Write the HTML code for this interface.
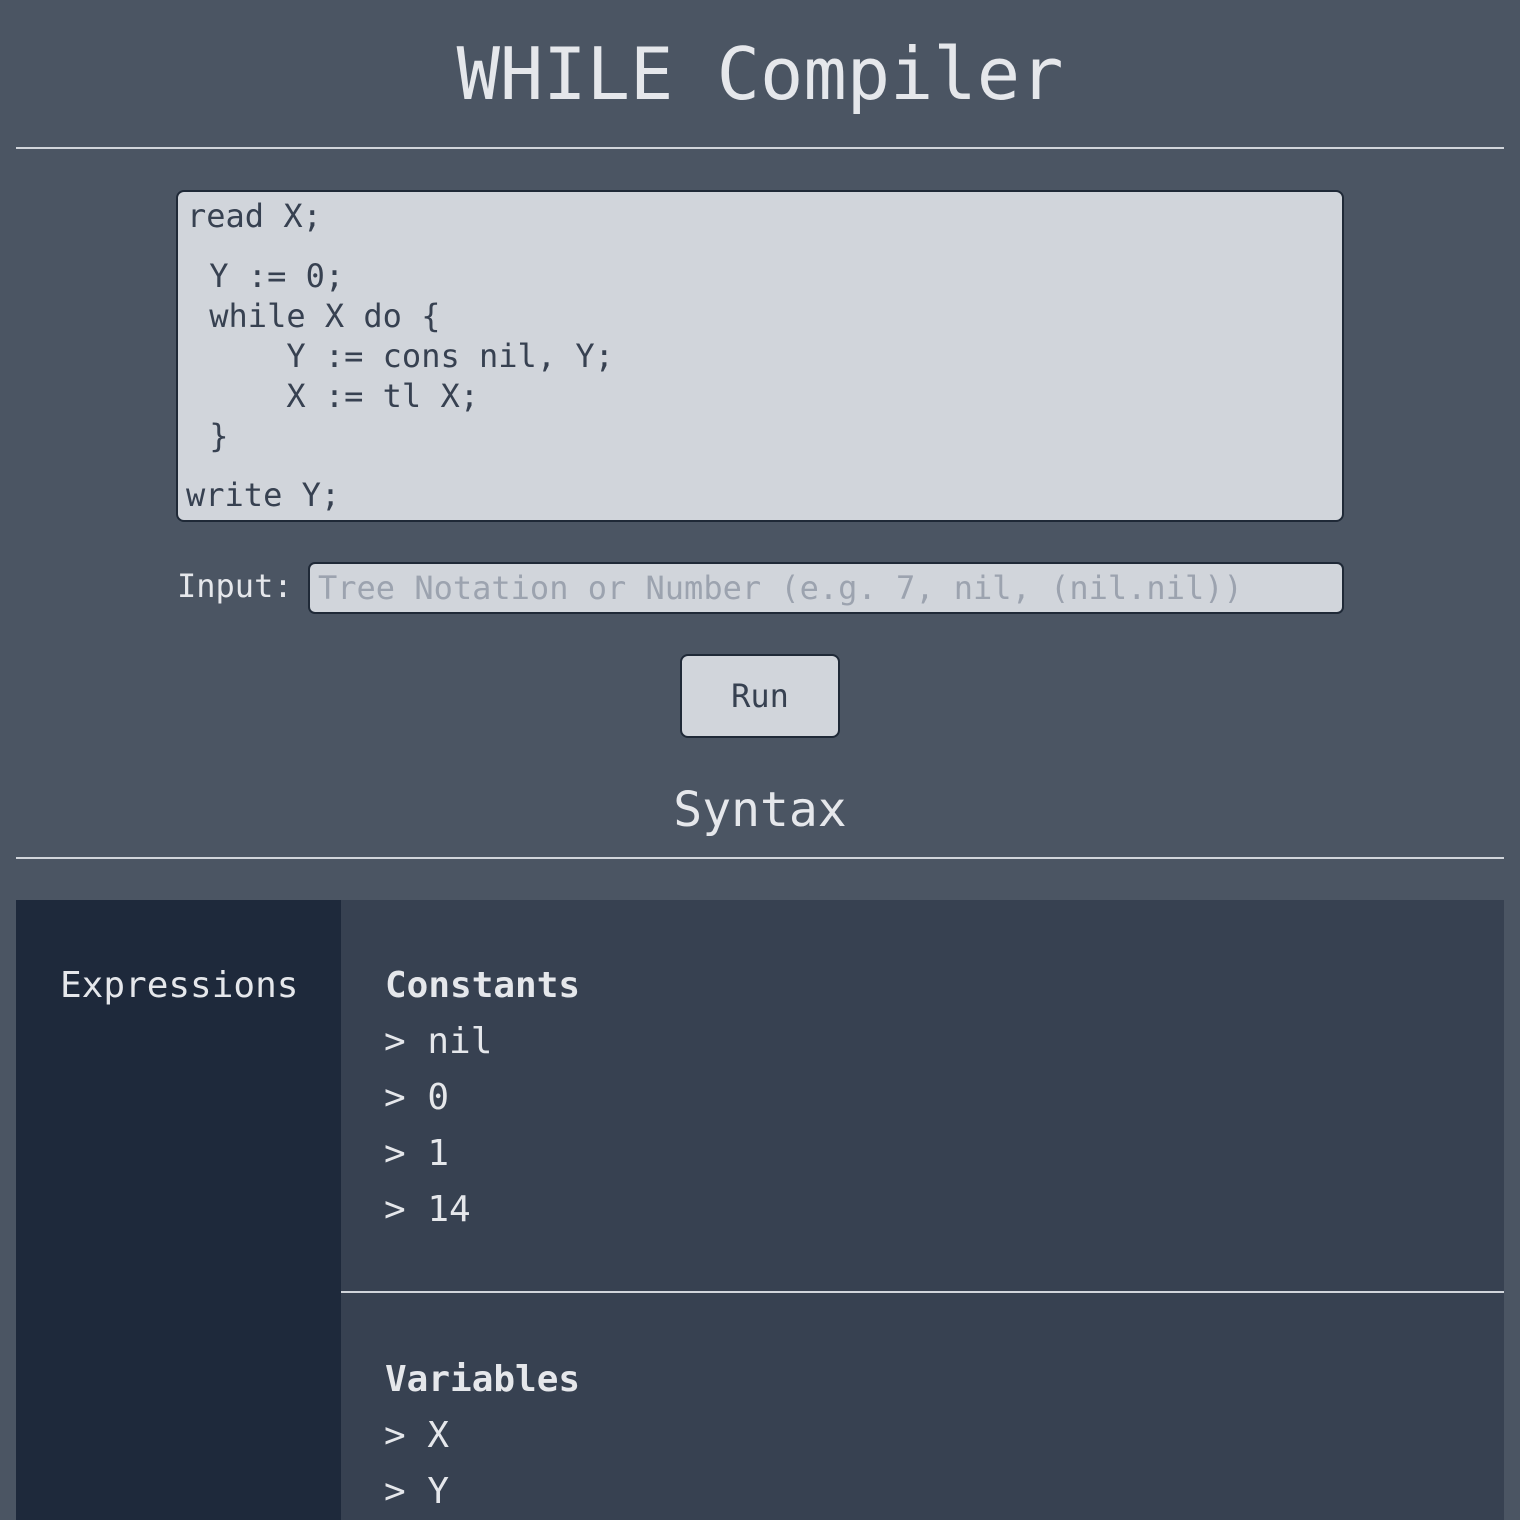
<!DOCTYPE html>
<html><head><meta charset="utf-8">
<style>
*{margin:0;padding:0;box-sizing:border-box}
html,body{width:1520px;height:1520px;overflow:hidden;background:#4b5563;font-family:"DejaVu Sans Mono","Liberation Mono",monospace;color:#e5e7eb}
.a{position:absolute;white-space:pre}
.hr{position:absolute;left:16px;width:1488px;height:2px;background:#d1d5db}
.box{position:absolute;background:#d1d5db;border:2px solid #1f2937;border-radius:8px}
.code{font-size:32px;line-height:40px;color:#374151}
.li{font-size:36px;line-height:56px;color:#e5e7eb}
</style></head><body>
<div class="a" style="left:0;width:1520px;text-align:center;top:32px;font-size:72px;line-height:84px">WHILE Compiler</div>
<div class="hr" style="top:147px"></div>

<div class="box" style="left:176px;top:190px;width:1168px;height:332px"></div>
<div class="a code" style="left:187px;top:196px">read X;</div>
<div class="a code" style="left:190px;top:256px"> Y := 0;
 while X do {
     Y := cons nil, Y;
     X := tl X;
 }</div>
<div class="a code" style="left:186px;top:475px">write Y;</div>

<div class="a" style="left:177px;top:566px;font-size:32px;line-height:40px;color:#e5e7eb">Input:</div>
<div class="box" style="left:308px;top:562px;width:1036px;height:52px;border-radius:7px"></div>
<div class="a" style="left:318px;top:568px;font-size:32px;line-height:40px;color:#9ca3af">Tree Notation or Number (e.g. 7, nil, (nil.nil))</div>

<div class="box" style="left:680px;top:654px;width:160px;height:84px;border-radius:8px"></div>
<div class="a" style="left:680px;width:160px;text-align:center;top:676px;font-size:32px;line-height:40px;color:#374151">Run</div>

<div class="a" style="left:0;width:1520px;text-align:center;top:782px;font-size:48px;line-height:56px">Syntax</div>
<div class="hr" style="top:857px"></div>

<div class="a" style="left:16px;top:900px;width:325px;height:620px;background:#1e293b"></div>
<div class="a" style="left:341px;top:900px;width:1163px;height:620px;background:#374151"></div>
<div class="a" style="left:341px;top:1291px;width:1163px;height:2px;background:#d1d5db"></div>

<div class="a" style="left:60px;top:964px;font-size:36px;line-height:44px;color:#e5e7eb">Expressions</div>

<div class="a" style="left:385px;top:964px;font-size:36px;line-height:44px;font-weight:bold;color:#e5e7eb">Constants</div>
<div class="a li" style="left:384px;top:1014px">&gt; nil
&gt; 0
&gt; 1
&gt; 14</div>

<div class="a" style="left:385px;top:1358px;font-size:36px;line-height:44px;font-weight:bold;color:#e5e7eb">Variables</div>
<div class="a li" style="left:384px;top:1408px">&gt; X
&gt; Y</div>
</body></html>
